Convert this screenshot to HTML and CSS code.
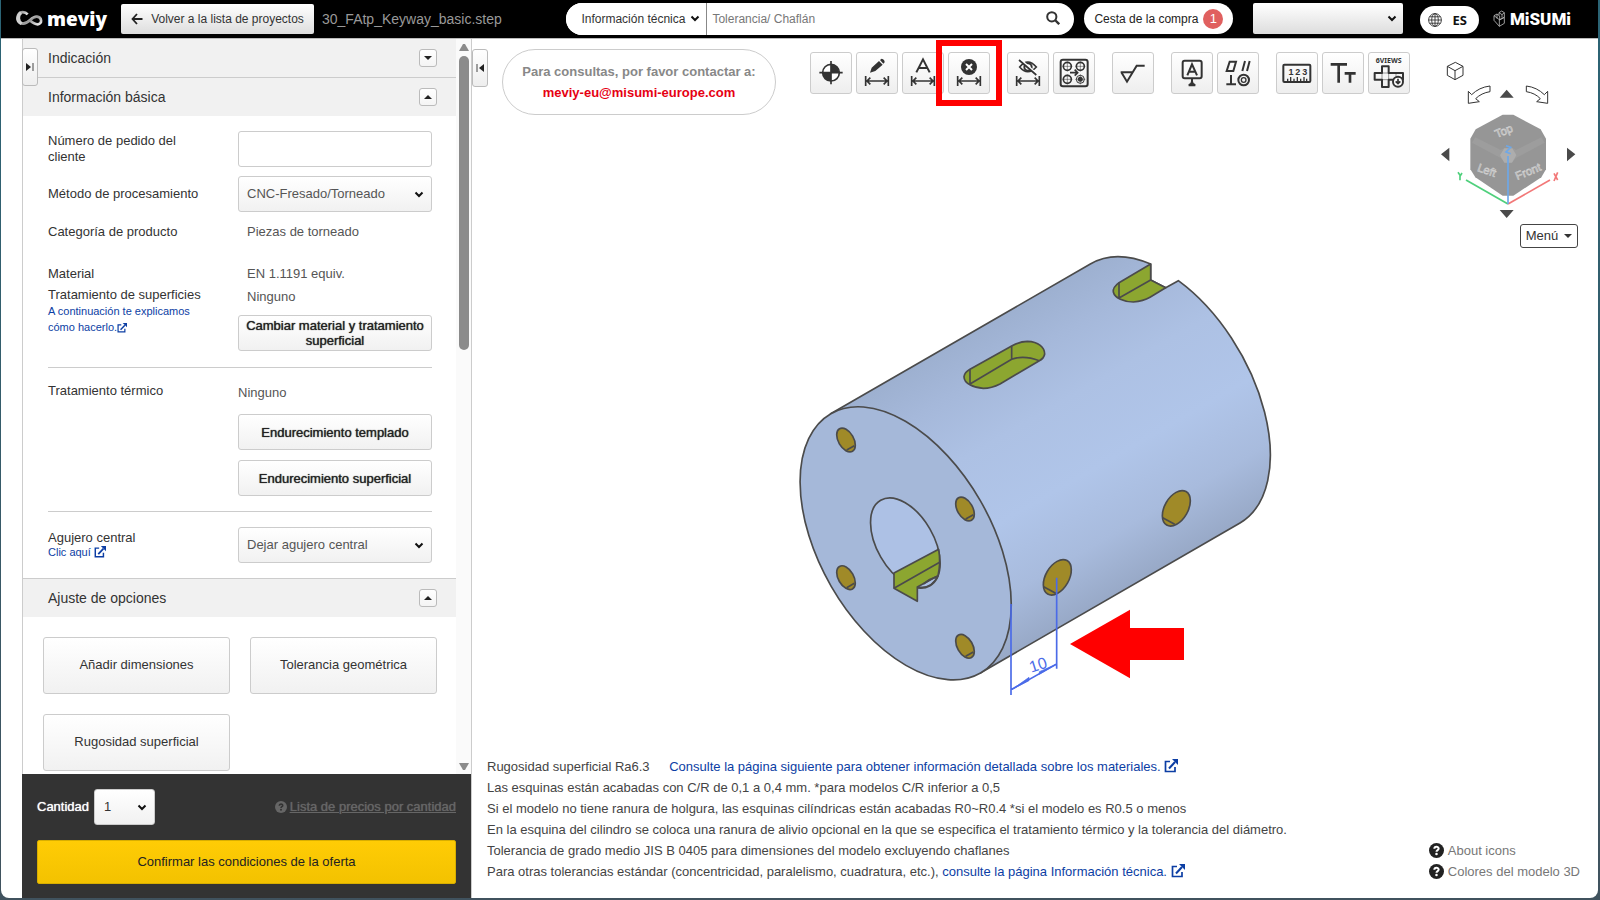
FILE: index.html
```html
<!DOCTYPE html>
<html lang="es">
<head>
<meta charset="utf-8">
<title>meviy</title>
<link rel="stylesheet" href="styles.css">
</head>
<body>
<svg class="defs" width="0" height="0" aria-hidden="true">
  <defs>
    <symbol id="ext" viewBox="0 0 14 14"><path d="M6 2.5H1.5v10h9.500V8" fill="none" stroke="currentColor" stroke-width="1.700"/><path d="M8 0h6v6z" fill="currentColor"/><path d="M5 9.500 11 3" stroke="currentColor" stroke-width="2"/></symbol>
    <symbol id="help" viewBox="0 0 14 14"><circle cx="7" cy="7" r="7" fill="currentColor"/><path d="M5 5.400C5 3 9 3 9 5.200 9 6.700 7 6.600 7 8.200" fill="none" stroke="var(--mark)" stroke-width="1.900"/><circle cx="7" cy="10.300" r="1.200" fill="var(--mark)"/></symbol>
    <symbol id="dim" viewBox="0 0 126 126"><path d="M29 72v30M97 72v30M32 87h62M43 77 33 87l10 10M83 77l10 10-10 10" fill="none" stroke="currentColor" stroke-width="5"/></symbol>
  </defs>
</svg>
<div class="window">
  <header class="topbar">
    <a class="brand" href="#" aria-label="meviy">
      <svg width="29" height="18" viewBox="0 0 87 54" aria-hidden="true">
        <defs><linearGradient id="silver" x1="0" y1="0" x2="1" y2="1"><stop offset="0" stop-color="#888"/><stop offset=".35" stop-color="#f4f4f4"/><stop offset=".6" stop-color="#999"/><stop offset="1" stop-color="#eee"/></linearGradient></defs>
        <path d="M38 13C30 4 16 4 10 14c-7 14 0 26 14 27 19 0 24-22 42-21 15 1 17 22 2 23-11 0-18-7-25-13" fill="none" stroke="url(#silver)" stroke-width="8"/>
        <path d="M18 8C7 16 8 34 20 41" fill="none" stroke="#d0d0d0" stroke-width="10"/>
      </svg>
      <span>meviy</span>
    </a>
    <button class="back" type="button">
      <svg width="12" height="12" viewBox="0 0 12 12" aria-hidden="true"><path d="M6 1 1.500 6 6 11M1.500 6H11.500" fill="none" stroke="#222" stroke-width="1.800"/></svg>
      Volver a la lista de proyectos
    </button>
    <span class="filename">30_FAtp_Keyway_basic.step</span>
    <form class="search">
      <select aria-label="Ámbito de búsqueda"><option>Información técnica</option></select>
      <input type="text" aria-label="Buscar" placeholder="Tolerancia/ Chaflán">
      <button type="button" aria-label="Buscar"><svg width="14" height="14" viewBox="0 0 14 14"><circle cx="5.800" cy="5.800" r="4.600" fill="none" stroke="#333" stroke-width="2"/><path d="m9 9 4.200 4.200" stroke="#333" stroke-width="2.400"/></svg></button>
    </form>
    <a class="cart" href="#">Cesta de la compra <b>1</b></a>
    <select class="account" aria-label="Cuenta"><option></option></select>
    <button class="lang" type="button">
      <svg width="14" height="14" viewBox="0 0 14 14" fill="none" stroke="#333" stroke-width=".9" aria-hidden="true"><circle cx="7" cy="7" r="6.400"/><ellipse cx="7" cy="7" rx="3.300" ry="6.400"/><path d="M7 .6v12.800M.6 7h12.800M1.500 3.800h11M1.500 10.200h11"/></svg>
      ES
    </button>
    <a class="misumi" href="#">
      <svg width="14" height="18" viewBox="0 0 42 54" fill="none" stroke="#bbb" stroke-width="2.500" aria-hidden="true"><path d="M3 17 12 12l8 6v12l14-8V8L26 3l-8 5v8M3 17v14l16 18 15-9V22M3 17l16 12v20M19 29l15-7M12 12v14M18 8l9 6v9M27 14l7-6"/></svg>
      <span>MiSUMi</span>
    </a>
  </header>

  <div class="workspace">
    <aside class="panel">
      <button class="tab" type="button" aria-label="Expandir"><svg width="8" height="8" viewBox="0 0 8 8"><path d="M0 0 5 4 0 8z" fill="#222"/><path d="M7 0v8" stroke="#444"/></svg></button>
      <div class="scroll">
        <div class="content">
          <div class="section lined"><h2>Indicación</h2><button class="fold" type="button" aria-label="Desplegar"><svg width="8" height="4" viewBox="0 0 8 4"><path d="M0 0h8L4 4z" fill="#222"/></svg></button></div>
          <div class="section"><h2>Información básica</h2><button class="fold" type="button" aria-label="Plegar"><svg width="8" height="4" viewBox="0 0 8 4"><path d="M0 4h8L4 0z" fill="#222"/></svg></button></div>
          <div class="fields">
            <div class="field order"><label for="pedido">Número de pedido del cliente</label><input class="box" id="pedido" type="text"></div>
            <div class="field"><label for="metodo">Método de procesamiento</label><select class="box" id="metodo"><option>CNC-Fresado/Torneado</option></select></div>
            <div class="field category"><span>Categoría de producto</span><span class="inset">Piezas de torneado</span></div>
            <div class="field material">
              <div><p>Material</p><p>Tratamiento de superficies</p><a class="small" href="#">A continuación te explicamos cómo hacerlo.<svg class="ext" width="10" height="10"><use href="#ext"/></svg></a></div>
              <div><p class="inset">EN 1.1191 equiv.</p><p class="inset second">Ninguno</p><button class="box strong" type="button">Cambiar material y tratamiento superficial</button></div>
            </div>
            <div class="field heat">
              <span>Tratamiento térmico</span>
              <div class="stack"><span class="value">Ninguno</span><button class="box strong" type="button">Endurecimiento templado</button><button class="box strong" type="button">Endurecimiento superficial</button></div>
            </div>
            <div class="field hole">
              <div class="tight"><label for="agujero">Agujero central</label><a class="small" href="#">Clic aquí <svg class="ext" width="12" height="12"><use href="#ext"/></svg></a></div>
              <select class="box" id="agujero"><option>Dejar agujero central</option></select>
            </div>
          </div>
          <div class="section topline"><h2>Ajuste de opciones</h2><button class="fold" type="button" aria-label="Plegar"><svg width="8" height="4" viewBox="0 0 8 4"><path d="M0 4h8L4 0z" fill="#222"/></svg></button></div>
          <div class="options">
            <button type="button">Añadir dimensiones</button>
            <button type="button">Tolerancia geométrica</button>
            <button type="button">Rugosidad superficial</button>
          </div>
        </div>
        <div class="bar" aria-hidden="true">
          <svg width="10" height="8" viewBox="0 0 10 8"><path d="M0 8 4 1h2l4 7z" fill="#8b8b8b"/></svg>
          <i class="thumb"></i>
          <svg width="10" height="8" viewBox="0 0 10 8"><path d="M0 0 4 7h2l4-7z" fill="#8b8b8b"/></svg>
        </div>
      </div>
      <div class="order-bar">
        <div class="qty">
          <label for="cantidad">Cantidad</label>
          <select id="cantidad"><option>1</option></select>
          <a class="prices" href="#"><svg width="12" height="12"><use href="#help"/></svg><span>Lista de precios por cantidad</span></a>
        </div>
        <button class="confirm" type="button">Confirmar las condiciones de la oferta</button>
      </div>
    </aside>

    <main class="canvas">
      <button class="tab" type="button" aria-label="Contraer"><svg width="8" height="8" viewBox="0 0 8 8"><path d="M8 0 3 4l5 4z" fill="#222"/><path d="M1 0v8" stroke="#444"/></svg></button>
      <div class="tools">
        <div class="contact"><span>Para consultas, por favor contactar a:</span><a href="mailto:meviy-eu@misumi-europe.com">meviy-eu@misumi-europe.com</a></div>
        <div class="toolbar" role="toolbar" aria-label="Herramientas">
          <div class="group">
            <button type="button" aria-label="Origen"><svg viewBox="0 0 126 126"><circle cx="63" cy="62" r="25" fill="#fff" stroke="#333" stroke-width="5"/><path d="M63 62V37a25 25 0 0 1 25 25zM63 62v25a25 25 0 0 1-25-25z" fill="#333"/><path d="M63 27v70M28 62h70" stroke="#333" stroke-width="5"/></svg></button>
            <button type="button" aria-label="Editar cota"><svg viewBox="0 0 126 126"><path d="m42 62 5-15 22-20 11 11-22 19zM72 24l5-4q9 2 9 11l-4 4z" fill="#333"/><use href="#dim"/></svg></button>
            <button type="button" aria-label="Texto de cota"><svg viewBox="0 0 126 126"><path d="M43 61 63 22l20 39M50 48h26" fill="none" stroke="#333" stroke-width="6"/><use href="#dim"/></svg></button>
            <div class="marked"><button type="button" aria-label="Eliminar cota"><svg viewBox="0 0 126 126"><circle cx="63" cy="45" r="24" fill="#333"/><path d="m54 36 18 18m0-18L54 54" stroke="#fff" stroke-width="6"/><use href="#dim"/></svg></button></div>
          </div>
          <div class="group">
            <button type="button" aria-label="Ocultar cota"><svg viewBox="0 0 126 126"><path d="M38 45q24-30 50 0-26 28-50 0z" fill="none" stroke="#333" stroke-width="5"/><circle cx="63" cy="45" r="11" fill="#fff" stroke="#333" stroke-width="6"/><path d="m39 21 51 46" stroke="#fff" stroke-width="6"/><path d="m36 24 52 45" stroke="#333" stroke-width="5"/><use href="#dim"/></svg></button>
            <button type="button" aria-label="Agrupar agujeros"><svg viewBox="0 0 126 126" fill="none" stroke="#333" stroke-width="5"><rect x="23" y="23" width="81" height="80" rx="7" stroke-width="6"/><circle cx="43" cy="43" r="12"/><circle cx="82" cy="43" r="12"/><circle cx="43" cy="82" r="12"/><circle cx="82" cy="82" r="12" stroke-width="3"/><path d="M28 43h30M43 28v30M67 43h30M82 28v30M28 82h30M43 67v30M67 82h30M82 67v30" stroke-width="1.500"/><circle cx="82" cy="82" r="5" fill="#333"/><path d="M51 62h22M65 53l9 9-9 9"/></svg></button>
          </div>
          <div class="group">
            <button type="button" aria-label="Rugosidad"><svg viewBox="0 0 126 126"><path d="M26 61h36M28 61l17 28 29-48h24" fill="none" stroke="#333" stroke-width="6"/></svg></button>
          </div>
          <div class="group">
            <button type="button" aria-label="Referencia"><svg viewBox="0 0 126 126" fill="none" stroke="#333" stroke-width="6"><rect x="35" y="26" width="57" height="53" rx="6"/><path d="m49 70 14-33 15 33M53 59h20"/><path d="M63 79v14"/><path d="M53 100q10-2 10-12 0 10 10 12z" fill="#333"/></svg></button>
            <button type="button" aria-label="Tolerancia geométrica"><svg viewBox="0 0 126 126" fill="none" stroke="#333" stroke-width="6"><path d="m29 57 9-28h19l-8 28zM76 57l8-30M90 57l8-30M28 97h29M42 69v28"/><circle cx="80" cy="84" r="16"/><circle cx="80" cy="84" r="7" stroke-width="4"/></svg></button>
          </div>
          <div class="group">
            <button type="button" aria-label="Medir"><svg viewBox="0 0 126 126" fill="none" stroke="#333"><rect x="22" y="38" width="81" height="52" rx="3" stroke-width="6"/><path d="M35 88V80M44 88V75M54 88V80M64 88V75M74 88V80M84 88V75M92 88V80" stroke-width="4"/><g class="ruler"><text x="45" y="69">1</text><text x="65" y="69">2</text><text x="86" y="69">3</text></g></svg></button>
            <button type="button" aria-label="Tamaño de texto"><svg viewBox="0 0 126 126"><path d="M26 37h49M50 37v55M68 64h33M84 64v28" fill="none" stroke="#333" stroke-width="8"/></svg></button>
            <button type="button" aria-label="6 vistas"><svg viewBox="0 0 126 126" fill="none" stroke="#333" stroke-width="6"><text x="62" y="33" class="views">6VIEWS</text><path d="M42 43h20v20h43v20H62v22H42V83H20V63h22z" stroke-linejoin="round"/><path d="M42 63h20v20H42zM84 63v10" stroke-width="1.500"/><circle cx="90" cy="89" r="15" fill="#fff"/><path d="M90 80v14M83 88l7 7 7-7" stroke-width="5"/></svg></button>
          </div>
        </div>
      </div>

      <svg class="model" viewBox="0 0 1500 1380" role="img" aria-label="Modelo 3D">
        <defs><linearGradient id="body" gradientUnits="userSpaceOnUse" x1="122" y1="521" x2="571" y2="1299"><stop offset="0" stop-color="#9db0d0"/><stop offset=".15" stop-color="#a5b8da"/><stop offset=".35" stop-color="#adc1e4"/><stop offset=".6" stop-color="#b0c5e9"/><stop offset=".82" stop-color="#a8bbdd"/><stop offset="1" stop-color="#98a9c7"/></linearGradient></defs>
        <g stroke="#4b4b4b" stroke-width="5" stroke-linejoin="round">
          <path d="M122 521 901 72A449 258 60 0 1 1082 72V120L1127 143 1165 122A449 258 60 0 1 1350 849L571 1299Z" fill="url(#body)"/>
          <path d="M1082 72 987 128Q968 142 970 156C974 174 1002 186 1030 186Q1060 184 1080 172L1127 143 1082 120Z" fill="#8ca630"/>
          <path d="M987 128v46L1082 120" fill="none"/>
          <path d="M540 388 665 318Q690 304 712 304C746 305 764 322 764 342Q762 355 748 362L630 432Q605 445 580 445C550 443 522 430 522 410Q524 397 540 388Z" fill="#8ca630"/>
          <path d="M540 388v44L665 358V318M665 358Q700 344 748 362" fill="none"/>
          <ellipse cx="347" cy="910" rx="449" ry="258" transform="rotate(60 347 910)" fill="#a5b8d9"/>
          <ellipse cx="346" cy="909" rx="148" ry="85" transform="rotate(60 346 909)" fill="#adc1e5"/>
          <path d="M312 999 446 928Q453 970 444 1007L382 1041V1084L312 1045Z" fill="#8ca630"/>
          <path d="M312 1045 449 967M385 1041Q425 1048 444 1007M400 1032Q420 1016 440 1010" fill="none"/>
        </g>
        <g fill="#a08a28" stroke="#4b4b4b" stroke-width="5">
          <g id="pin"><ellipse cx="168" cy="600" rx="39" ry="23" transform="rotate(60 168 600)"/><path d="M170 630 193 617" fill="none"/></g>
          <use href="#pin" x="357" y="207"/><use href="#pin" y="413"/><use href="#pin" x="357" y="619"/>
          <g id="side"><ellipse cx="802" cy="1012" rx="58" ry="35" transform="rotate(-60 802 1012)"/><path d="M761 1040 797 1060" fill="none"/></g>
          <use href="#side" x="357" y="-207"/>
        </g>
        <g fill="none" stroke="#4b6be8" stroke-width="5"><path d="M663 1092V1365M800 1013V1286M663 1349 800 1272" /><path d="m665 1349 52-37v10zM800 1272l-52 23v8z" fill="#4b6be8" stroke-width="2"/></g>
        <text class="measure" transform="rotate(-18 724 1298)" x="724" y="1298">10</text>
        <path d="M840 1212 1020 1109V1164H1182V1260H1020V1315Z" fill="#f00"/>
      </svg>

      <div class="view">
        <svg viewBox="0 0 540 510" role="img" aria-label="Cubo de vistas">
          <g fill="#fff" stroke="#333" stroke-width="3" stroke-linejoin="round"><path d="m106 37 23 12v27l-24 13-23-13V49zM82 49l23 13 24-13M105 62v27"/>
          <path d="M145 160v-36l10 10q22-22 55-26v17q-26 4-43 21l11 9zM383 160v-36l-10 10q-22-22-54-26v17q26 4 42 21l-11 9z"/></g>
          <path d="M239 143 260 119l21 24zM239 480h42l-21 24zM88 293v41l-25-21zM441 293v41l25-21z" fill="#4a4a4a"/>
          <path d="M248 194h32l82 44 16 28v92l-14 24-84 55h-32l-82-55-15-24v-92l16-28z" fill="#969696"/>
          <path d="m166 262 76 38 12-7h22l12 7 76-38 10 16-86 46-14 14h-18l-14-14-86-46z" fill="#9d9d9d"/>
          <path d="m240 316 13-21h24l12 21-13 22h-23z" fill="#adadad"/>
          <g class="faces"><text x="230" y="264" transform="rotate(-22 230 264)">Top</text><text x="170" y="362" transform="rotate(20 170 362)">Left</text><text x="292" y="390" transform="rotate(-22 292 390)">Front</text></g>
          <g fill="none" stroke-width="5"><path d="M138 390 264 462" stroke="#4fd07c"/><path d="M264 462 390 390" stroke="#f27878"/><path d="M264 462V318" stroke="#6ea8e8"/><path d="M258 287l14 5-14 14 14 5" stroke="#6ea8e8"/><path d="m114 367 7 10 5-8M120 377v14" stroke="#4fd07c"/><path d="m402 370 11 20M413 367l-11 26" stroke="#f27878"/></g>
        </svg>
        <button class="menu" type="button">Menú <svg width="8" height="4" viewBox="0 0 8 4" aria-hidden="true"><path d="M0 0h8L4 4z" fill="#333"/></svg></button>
      </div>

      <div class="notes">
        <div>
          <p>Rugosidad superficial Ra6.3 <a class="materials" href="#">Consulte la página siguiente para obtener información detallada sobre los materiales. <svg class="ext" width="14" height="14"><use href="#ext"/></svg></a></p>
          <p>Las esquinas están acabadas con C/R de 0,1 a 0,4 mm. *para modelos C/R inferior a 0,5</p>
          <p>Si el modelo no tiene ranura de holgura, las esquinas cilíndricas están acabadas R0~R0.4 *si el modelo es R0.5 o menos</p>
          <p>En la esquina del cilindro se coloca una ranura de alivio opcional en la que se especifica el tratamiento térmico y la tolerancia del diámetro.</p>
          <p>Tolerancia de grado medio JIS B 0405 para dimensiones del modelo excluyendo chaflanes</p>
          <p>Para otras tolerancias estándar (concentricidad, paralelismo, cuadratura, etc.), <a href="#">consulte la página Información técnica. <svg class="ext" width="14" height="14"><use href="#ext"/></svg></a></p>
        </div>
        <div class="helps">
          <a href="#"><svg width="15" height="15"><use href="#help"/></svg>About icons</a>
          <a href="#"><svg width="15" height="15"><use href="#help"/></svg>Colores del modelo 3D</a>
        </div>
      </div>
    </main>
  </div>
</div>
</body>
</html>
```
FILE: styles.css
```css
* { box-sizing: border-box; }
body {
  margin: 0;
  padding: 0 2px 2px 1px;
  height: 100vh;
  background: linear-gradient(#2b6475, #40525e);
  font: 13px/16px "Liberation Sans", Arial, sans-serif;
  color: #333;
}
button, input, select { font: inherit; color: inherit; margin: 0; }
select {
  --chevron: url("data:image/svg+xml,%3Csvg xmlns='http://www.w3.org/2000/svg' width='10' height='7' viewBox='0 0 10 7'%3E%3Cpath d='M1.500 1.500 5 5 8.500 1.500' fill='none' stroke='%23111' stroke-width='2'/%3E%3C/svg%3E");
  appearance: none;
}
a { color: #0c3ea4; text-decoration: none; }
p, h2 { margin: 0; }
svg { display: block; flex: none; }
.defs { position: absolute; }
.window {
  display: flex;
  flex-direction: column;
  height: 100%;
  background: #fff;
  border-radius: 0 0 8px 8px;
  overflow: hidden;
}

.topbar {
  display: flex;
  align-items: center;
  flex: none;
  height: 39px;
  padding: 0 27px 1px 14px;
  background: #000;
  border-bottom: 1px solid #bbb;
}
.brand { display: flex; align-items: center; gap: 3px; width: 106px; color: #fff; }
.brand span { font: 800 19px/28px "Open Sans", sans-serif; }
.back {
  display: flex;
  align-items: center;
  justify-content: center;
  gap: 8px;
  width: 193px;
  height: 30px;
  padding: 0;
  border: 0;
  border-radius: 2px;
  background: linear-gradient(#fff, #ddd);
  font-size: 12px;
  white-space: nowrap;
}
.filename { margin-left: 8px; font-size: 14px; color: #999; }
.search {
  display: flex;
  align-items: center;
  width: 508px;
  height: 32px;
  margin-left: auto;
  border-radius: 16px;
  background: #fff;
  overflow: hidden;
}
.search select {
  width: 141px;
  height: 32px;
  padding: 0 16px 0 15px;
  border: 0;
  border-right: 1px solid #888;
  background: var(--chevron) right 6px center no-repeat #fff;
  font-size: 12px;
}
.search input { flex: 1; min-width: 0; height: 32px; padding: 0 5px; border: 0; font-size: 12px; }
.search input::placeholder { color: #777; }
.search button { padding: 0 14px 2px 8px; border: 0; background: none; }
.cart {
  display: flex;
  align-items: center;
  gap: 5px;
  height: 31px;
  margin-left: 10px;
  padding: 0 10px;
  border-radius: 16px;
  background: #fff;
  color: #222;
  font-size: 12px;
}
.cart b {
  width: 20px;
  border-radius: 10px;
  background: #e0605f;
  color: #fff;
  font: 13px/20px "Liberation Sans", Arial, sans-serif;
  text-align: center;
}
.account {
  width: 150px;
  height: 31px;
  margin-left: 20px;
  border: 0;
  border-radius: 2px;
  background: var(--chevron) right 6px center no-repeat, linear-gradient(#fff, #ddd);
}
.lang {
  display: flex;
  align-items: center;
  gap: 10px;
  height: 28px;
  margin: 2px 0 0 17px;
  padding: 0 12px 0 8px;
  border: 0;
  border-radius: 14px;
  background: #fff;
  color: #111;
  font: bold 13px/16px "Noto Sans", sans-serif;
}
.misumi { display: flex; align-items: center; gap: 3px; margin-left: 14px; color: #fff; }
.misumi span { font: 900 17px/20px Roboto, sans-serif; }

.workspace { display: flex; flex: 1; min-height: 0; }
.panel {
  position: relative;
  display: flex;
  flex-direction: column;
  flex: none;
  width: 450px;
  margin-left: 21px;
  border-left: 1px solid #ccc;
  border-right: 1px solid #ccc;
}
.tab {
  position: absolute;
  top: 9px;
  left: -1px;
  z-index: 2;
  display: grid;
  place-items: center;
  width: 16px;
  height: 38px;
  padding: 0;
  border: 1px solid #bbb;
  border-radius: 3px;
  background: linear-gradient(#fff, #eee);
}
.canvas > .tab { top: 10px; left: 0; }
.scroll { display: flex; flex: 1; min-height: 0; }
.content { flex: 1; overflow: hidden; }
.bar {
  display: flex;
  flex-direction: column;
  align-items: center;
  width: 15px;
  padding: 4px 0 3px;
  background: #fafafa;
}
.thumb { width: 10px; height: 294px; margin: 5px 0 auto; border-radius: 5px; background: #8b8b8b; }
.section {
  display: flex;
  align-items: center;
  justify-content: space-between;
  height: 38px;
  padding: 0 19px 0 25px;
  background: #f1f1f1;
}
.section h2 { font-size: 14px; font-weight: normal; }
.lined { height: 39px; border-bottom: 1px solid #ccc; }
.topline { height: 39px; border-top: 1px solid #ccc; }
.fold {
  display: grid;
  place-items: center;
  width: 18px;
  height: 18px;
  padding: 0;
  border: 1px solid #bbb;
  border-radius: 3px;
  background: linear-gradient(#fff, #f4f4f4);
}
.fields { padding: 15px 24px 0 25px; }
.field { display: grid; grid-template-columns: 190px 1fr; align-items: center; margin-bottom: 10px; }
.order { margin-bottom: 9px; }
.order label { padding-right: 50px; }
.box {
  width: 100%;
  height: 36px;
  padding: 0 9px;
  border: 1px solid #ccc;
  border-radius: 3px;
  background: linear-gradient(#fff, #f1f1f1);
}
select.box {
  padding: 0 24px 0 8px;
  background: var(--chevron) right 7px center no-repeat, linear-gradient(#fff, #f1f1f1);
  color: #555;
}
input.box { background: #fff; }
.strong { padding: 0 4px; line-height: 15px; color: #222; text-shadow: 0 0 1px #222; }
.inset { padding-left: 9px; color: #555; }
.value { color: #555; }
.category { margin: 12px 0 0; }
.material {
  align-items: start;
  margin: 26px 0 15px;
  padding-bottom: 16px;
  border-bottom: 1px solid #ccc;
}
.material p { margin-bottom: 5px; }
.material .second { margin: 7px 0 10px; }
.material p + .small { display: block; margin-top: -5px; padding-right: 40px; }
.small { font-size: 11px; line-height: 16px; }
.ext { display: inline-block; vertical-align: -2px; }
.heat { align-items: start; margin: 0 0 15px; padding-bottom: 15px; border-bottom: 1px solid #ccc; }
.stack { display: flex; flex-direction: column; gap: 10px; padding-top: 2px; }
.stack .value { margin-bottom: 3px; }
.hole { margin-bottom: 15px; }
.tight { display: flex; flex-direction: column; line-height: 14px; }
.tight .small { line-height: 14px; }
.options { display: grid; grid-template-columns: 1fr 1fr; gap: 20px; padding: 20px 19px 3px 20px; }
.options button {
  height: 57px;
  padding-bottom: 3px;
  border: 1px solid #ccc;
  border-radius: 3px;
  background: linear-gradient(#fff, #f1f1f1);
}
.order-bar { flex: none; margin: 0 0 0 -1px; padding: 15px 15px 14px; background: #333; }
.qty { display: flex; align-items: center; gap: 5px; color: #fff; }
.qty label { text-shadow: 0 0 1px #fff; }
.qty select {
  width: 61px;
  height: 36px;
  padding: 0 20px 0 9px;
  border: 1px solid #ccc;
  border-radius: 3px;
  background: var(--chevron) right 7px center no-repeat, linear-gradient(#fff, #f1f1f1);
  color: #333;
}
.prices { --mark: #333; display: flex; align-items: center; gap: 3px; margin-left: auto; color: #666; text-shadow: 0 0 1px #666; }
.prices span { text-decoration: underline; }
.confirm {
  width: 100%;
  height: 44px;
  margin-top: 15px;
  border: 1px solid #d8ae00;
  border-radius: 2px;
  background: linear-gradient(#ffcc05, #f3c200);
  color: #222;
}

.canvas { position: relative; display: flex; flex-direction: column; flex: 1; min-width: 0; }
.tools { display: flex; align-items: flex-start; padding: 10px 0 0 30px; }
.contact {
  display: flex;
  flex-direction: column;
  align-items: center;
  justify-content: center;
  width: 274px;
  height: 66px;
  border: 1px solid #ccc;
  border-radius: 33px;
  font-weight: bold;
  line-height: 21px;
  color: #888;
}
.contact a { color: #e60012; }
.toolbar { display: flex; gap: 17px; margin: 3px 0 0 34px; }
.group { display: flex; gap: 4px; }
.group button {
  display: block;
  width: 42px;
  height: 42px;
  padding: 0;
  border: 1px solid #ccc;
  border-radius: 3px;
  background: linear-gradient(#fff, #eee);
}
.group svg { width: 42px; height: 42px; margin: -1px; }
.marked { position: relative; z-index: 1; }
.marked::after {
  content: "";
  position: absolute;
  inset: -12px;
  border: 6px solid #f00;
  pointer-events: none;
}
.ruler { font: bold 27px "Liberation Sans", sans-serif; text-anchor: middle; fill: #333; stroke: none; }
.views { font: bold 21px "Noto Sans", sans-serif; text-anchor: middle; fill: #333; stroke: none; }
.model { position: absolute; left: 318px; top: 201px; width: 500px; height: 460px; }
.measure { font: 48px "Liberation Sans", sans-serif; fill: #4b6be8; }
.view { position: absolute; right: 0; top: 11px; display: flex; flex-direction: column; width: 178px; }
.view > svg { width: 180px; height: 170px; }
.faces { font: 34px "Liberation Sans", sans-serif; fill: #999; stroke: #d0d0d0; stroke-width: 2; }
.menu {
  display: flex;
  align-items: center;
  justify-content: center;
  gap: 6px;
  align-self: flex-end;
  width: 58px;
  height: 24px;
  margin: 4px 20px 0 0;
  padding: 0;
  border: 1px solid #444;
  border-radius: 3px;
  background: #fff;
}
.notes {
  display: flex;
  justify-content: space-between;
  align-items: flex-end;
  margin-top: auto;
  padding: 0 18px 16px 15px;
  line-height: 21px;
  color: #444;
}
.materials { margin-left: 16px; }
.helps { --mark: #fff; display: flex; flex-direction: column; }
.helps a { display: flex; align-items: center; gap: 4px; color: #777; }
.helps svg { color: #222; }
```
